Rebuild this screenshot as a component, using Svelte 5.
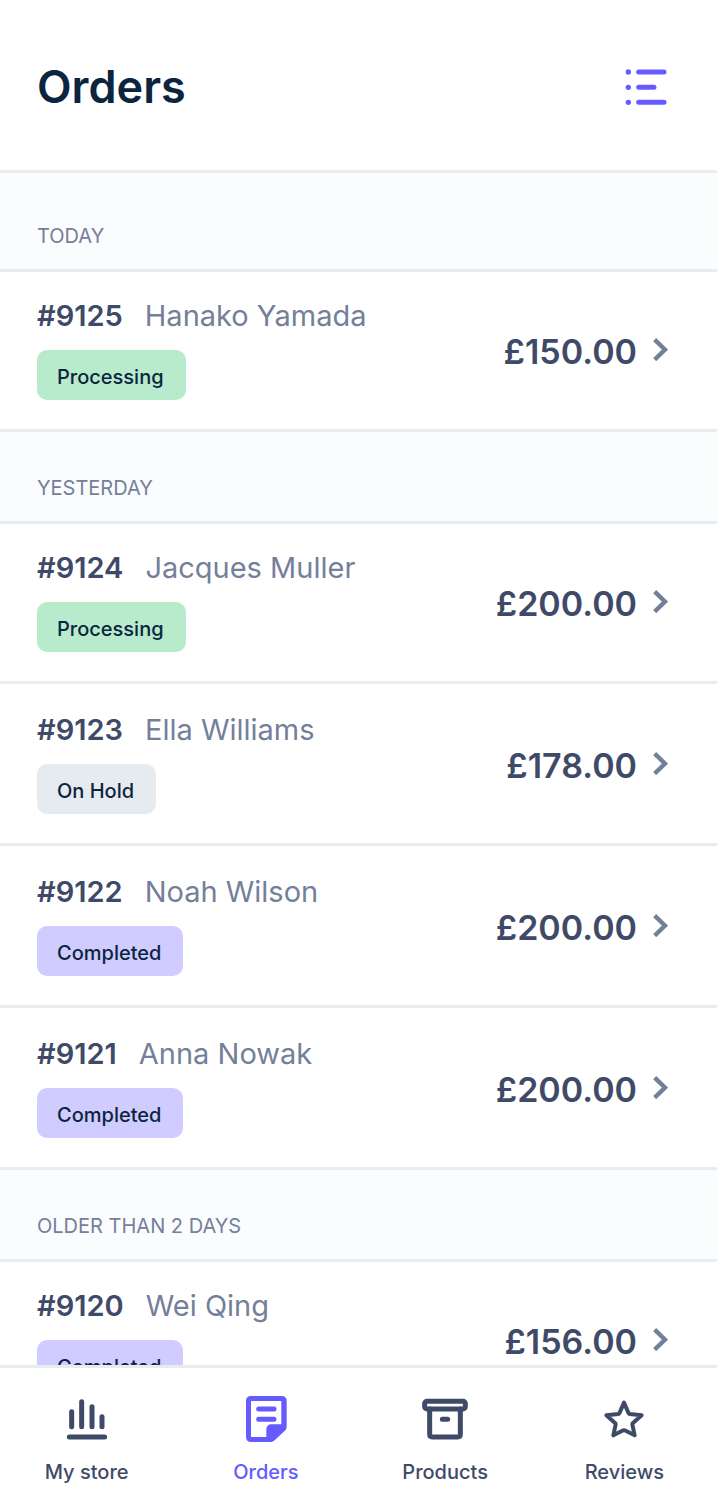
<script lang="ts">
	type Status = "Processing" | "On Hold" | "Completed";

	type Order = {
		id: number;
		customer: string;
		status: Status;
		total: string;
	};

	type Group = {
		label: string;
		orders: Order[];
	};

	const groups: Group[] = [
		{
			label: "TODAY",
			orders: [{ id: 9125, customer: "Hanako Yamada", status: "Processing", total: "£150.00" }],
		},
		{
			label: "YESTERDAY",
			orders: [
				{ id: 9124, customer: "Jacques Muller", status: "Processing", total: "£200.00" },
				{ id: 9123, customer: "Ella Williams", status: "On Hold", total: "£178.00" },
				{ id: 9122, customer: "Noah Wilson", status: "Completed", total: "£200.00" },
				{ id: 9121, customer: "Anna Nowak", status: "Completed", total: "£200.00" },
			],
		},
		{
			label: "OLDER THAN 2 DAYS",
			orders: [{ id: 9120, customer: "Wei Qing", status: "Completed", total: "£156.00" }],
		},
	];

	const tabs = [
		{ id: "store", label: "My store" },
		{ id: "orders", label: "Orders" },
		{ id: "products", label: "Products" },
		{ id: "reviews", label: "Reviews" },
	];

	let activeTab = $state("orders");

	function statusClass(status: Status) {
		return status.toLowerCase().replace(" ", "-");
	}
</script>

<div class="app">
	<header class="top">
		<h1>Orders</h1>
		<button class="filter" type="button" aria-label="Filter orders">
			<svg class="icon" viewBox="0 0 144 144" aria-hidden="true">
				<g fill="currentColor">
					<circle cx="16" cy="27" r="8" />
					<circle cx="16" cy="73" r="8" />
					<circle cx="16" cy="118" r="8" />
				</g>
				<path class="line" d="M47 27H123M47 73H93M47 118H123" />
			</svg>
		</button>
	</header>

	<main class="list">
		{#each groups as group (group.label)}
			<section class="group">
				<h2>{group.label}</h2>
				<ul>
					{#each group.orders as order (order.id)}
						<li>
							<a class="order" href={`#${order.id}`}>
								<div class="info">
									<div class="who">
										<span class="number">#{order.id}</span>
										<span class="customer">{order.customer}</span>
									</div>
									<span class={`badge ${statusClass(order.status)}`}>{order.status}</span>
								</div>
								<span class="total">{order.total}</span>
								<svg class="chevron" viewBox="0 0 45 72" aria-hidden="true">
									<path d="M5 8L36 38L5 68" />
								</svg>
							</a>
						</li>
					{/each}
				</ul>
			</section>
		{/each}
	</main>

	<nav class="tabs" aria-label="Main">
		{#each tabs as tab (tab.id)}
			<button
				type="button"
				class="tab"
				class:active={activeTab === tab.id}
				aria-current={activeTab === tab.id ? "page" : undefined}
				onclick={() => (activeTab = tab.id)}
			>
				<svg class="icon" viewBox="0 0 144 144" aria-hidden="true">
					{#if tab.id === "store"}
						<path class="line" d="M26 53V98M56 23V98M87 38V98M117 68V98M19 129H125" />
					{:else if tab.id === "orders"}
						<path
							fill="currentColor"
							fill-rule="evenodd"
							d="M26 6H120A14 14 0 0 1 134 20V100Q134 105 130 109L98 139Q93 144 87 144H26A14 14 0 0 1 12 130V20A14 14 0 0 1 26 6ZM27 21V129H73V105A14 14 0 0 1 87 91H118V21Z"
						/>
						<path class="line" d="M50 45H96M50 76H96" />
					{:else if tab.id === "products"}
						<rect class="line" x="11" y="22" width="122" height="23" rx="7" />
						<path class="line" d="M26 45V121Q26 129 34 129H110Q118 129 118 121V45M64 76H80" />
					{:else}
						<path
							class="line thin"
							d="M72 26L86 58Q87 60 89 60L125 64L99 87Q97 89 97 91L104 124L74 109Q72 108 70 109L40 124L47 91Q47 89 45 87L19 64L55 60Q57 60 58 58Z"
						/>
					{/if}
				</svg>
				<span>{tab.label}</span>
			</button>
		{/each}
	</nav>
</div>

<style>
	:global(body) {
		margin: 0;
		background: #fff;
	}

	.app {
		display: flex;
		flex-direction: column;
		height: 100vh;
		font-family: Inter, "Liberation Sans", sans-serif;
		color: #3f4a68;
	}

	h1,
	h2,
	ul {
		margin: 0;
		padding: 0;
	}

	button {
		border: 0;
		padding: 0;
		background: none;
		font: inherit;
		color: inherit;
		cursor: pointer;
	}

	.icon {
		display: block;
		width: 48px;
		height: 48px;
	}

	.line {
		fill: none;
		stroke: currentColor;
		stroke-width: 15;
		stroke-linecap: round;
		stroke-linejoin: round;
	}

	.line.thin {
		stroke-width: 12;
	}

	.top {
		display: flex;
		align-items: center;
		justify-content: space-between;
		flex: none;
		padding: 59px 46px 55px 37px;
		border-bottom: 3px solid #e7ecf0;
	}

	h1 {
		font-size: 45px;
		font-weight: 600;
		line-height: 56px;
		color: #0b2540;
	}

	.filter {
		color: #655bff;
	}

	.list {
		flex: 1;
		min-height: 0;
		overflow-y: auto;
		scrollbar-width: none;
	}

	h2 {
		padding: 42px 37px 19px;
		background: #fbfcfe;
		border-bottom: 3px solid #e7ecf0;
		font-size: 20px;
		font-weight: 400;
		line-height: 28px;
		color: #74809a;
	}

	.group:first-child h2 {
		padding-top: 49px;
	}

	ul {
		list-style: none;
	}

	.order {
		display: flex;
		align-items: center;
		padding: 28px 49px 29px 37px;
		border-bottom: 3px solid #e7ecf0;
		color: inherit;
		text-decoration: none;
	}

	li:first-child .order {
		padding-top: 26px;
	}

	.info {
		flex: 1;
	}

	.who {
		display: flex;
		gap: 22px;
		margin-bottom: 16px;
		font-size: 29px;
		line-height: 36px;
	}

	.number {
		font-weight: 600;
	}

	.customer {
		color: #74809a;
	}

	.badge {
		display: inline-block;
		padding: 4px 22px 0 20px;
		border-radius: 10px;
		font-size: 20px;
		font-weight: 500;
		line-height: 46px;
		vertical-align: top;
		color: #0b2540;
	}

	.processing {
		background: #b8ebcc;
	}

	.on-hold {
		background: #e6ebf0;
	}

	.completed {
		background: #d0ccff;
	}

	.total {
		padding-top: 6px;
		font-size: 34px;
		font-weight: 600;
		line-height: 44px;
	}

	.chevron {
		width: 15px;
		height: 24px;
		margin-left: 16px;
	}

	.chevron path {
		fill: none;
		stroke: #74809a;
		stroke-width: 13;
	}

	.tabs {
		display: grid;
		grid-template-columns: repeat(4, 1fr);
		column-gap: 38px;
		flex: none;
		padding: 26px 22px 23px 16px;
		border-top: 3px solid #e7ecf0;
		background: #fff;
	}

	.tab {
		display: flex;
		flex-direction: column;
		align-items: center;
		gap: 16px;
		font-size: 20px;
		font-weight: 500;
		line-height: 28px;
		white-space: nowrap;
	}

	.tab.active {
		color: #655bff;
	}
</style>
